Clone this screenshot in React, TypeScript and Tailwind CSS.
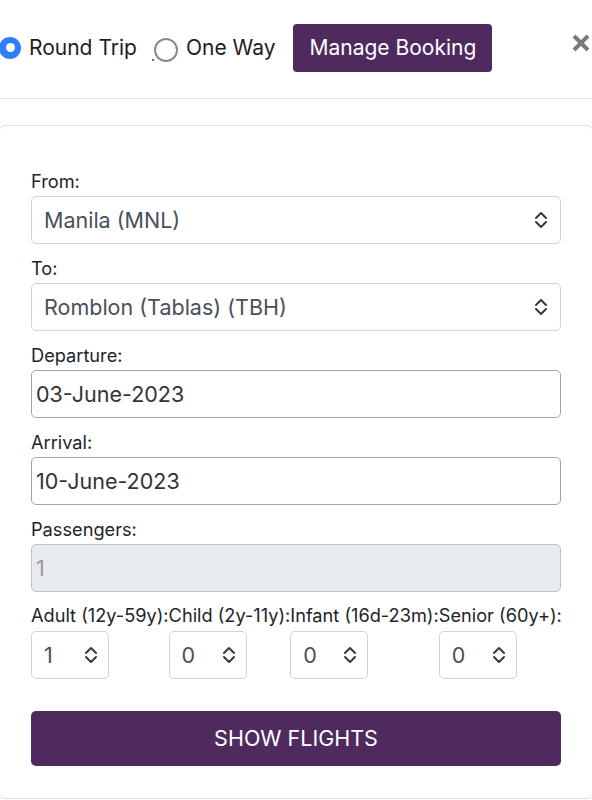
import React from "react";

const font = { fontFamily: "Inter, 'Liberation Sans', sans-serif" };

function Chevrons() {
  return (
    <svg width="14" height="18" viewBox="0 0 14 18" fill="none" className="shrink-0">
      <path d="M2 7 L7 2 L12 7" stroke="#343a40" strokeWidth="2" strokeLinecap="round" strokeLinejoin="round" />
      <path d="M2 11 L7 16 L12 11" stroke="#343a40" strokeWidth="2" strokeLinecap="round" strokeLinejoin="round" />
    </svg>
  );
}

function Label({ children }: { children: React.ReactNode }) {
  return <div className="mb-[3px] text-[18.2px] leading-6 text-[#212529]">{children}</div>;
}

function Select({ value }: { value: string }) {
  return (
    <div className="flex h-12 items-center justify-between rounded-[5px] border border-[#ced4da] bg-white pl-3 pr-3 text-[21.5px] text-[#495057]">
      <span>{value}</span>
      <Chevrons />
    </div>
  );
}

function DateInput({ value }: { value: string }) {
  return (
    <div className="flex h-12 items-center rounded-[5px] border border-[#a3a3a3] bg-white px-[4px] text-[21.5px] text-[#333]">
      {value}
    </div>
  );
}

function Count({ label, value }: { label: string; value: string }) {
  return (
    <div className="flex flex-col">
      <div className="text-[18.2px] leading-6 text-[#212529] whitespace-nowrap">{label}</div>
      <div className="mt-[4px] flex h-12 w-[78px] items-center justify-between rounded-[5px] border border-[#ced4da] bg-white pl-3 pr-[10px] text-[21.5px] text-[#495057]">
        <span>{value}</span>
        <Chevrons />
      </div>
    </div>
  );
}

export default function App() {
  return (
    <div className="min-h-[800px] overflow-hidden bg-white" style={font}>
      <header className="flex h-[99px] items-center border-b border-[#dee2e6] pb-[3px]">
        <div className="ml-[-1px] flex items-center">
          <span className="flex h-[22px] w-[22px] items-center justify-center rounded-full bg-[#2f7ef5]">
            <span className="h-[9px] w-[9px] rounded-full bg-white" />
          </span>
          <span className="ml-[8px] text-[21px] text-[#1d1d1f]">Round Trip</span>
          <span className="relative ml-[17px] mt-[4px] h-[24px] w-[24px] rounded-full border-2 border-[#8a8a8a]">
            <span className="absolute left-[-4px] bottom-[-1px] h-[2px] w-[2px] rounded-full bg-[#4e2a5f]" />
          </span>
          <span className="ml-[8px] text-[21px] text-[#1d1d1f]">One Way</span>
          <button className="ml-[18px] h-12 rounded-[4px] bg-[#4e2a5f] px-[16px] text-[21px] text-white">
            Manage Booking
          </button>
        </div>
        <div className="ml-auto mr-[1px] mt-[-10px]">
          <svg width="20" height="20" viewBox="0 0 20 20">
            <path d="M3 3 L17 17 M17 3 L3 17" stroke="#7a7a7a" strokeWidth="4" />
          </svg>
        </div>
      </header>

      <main className="mx-[-1px] mt-[26px] rounded-[6px] border border-[#dee2e6] px-[31px] pt-[43px] pb-[32px]">
        <Label>From:</Label>
        <Select value="Manila (MNL)" />
        <div className="mt-3">
          <Label>To:</Label>
          <Select value="Romblon (Tablas) (TBH)" />
        </div>
        <div className="mt-3">
          <Label>Departure:</Label>
          <DateInput value="03-June-2023" />
        </div>
        <div className="mt-3">
          <Label>Arrival:</Label>
          <DateInput value="10-June-2023" />
        </div>
        <div className="mt-3">
          <Label>Passengers:</Label>
          <div className="flex h-12 items-center rounded-[5px] border border-[#c4c4c4] bg-[#e9ecef] px-[4px] text-[21.5px] text-[#9a9a9a]">
            1
          </div>
        </div>
        <div className="mt-[11px] flex">
          <Count label="Adult (12y-59y):" value="1" />
          <Count label="Child (2y-11y):" value="0" />
          <Count label="Infant (16d-23m):" value="0" />
          <Count label="Senior (60y+):" value="0" />
        </div>
        <button className="mt-8 h-[55px] w-full rounded-[5px] bg-[#4e2a5f] text-[21.5px] text-white">
          SHOW FLIGHTS
        </button>
      </main>
    </div>
  );
}
